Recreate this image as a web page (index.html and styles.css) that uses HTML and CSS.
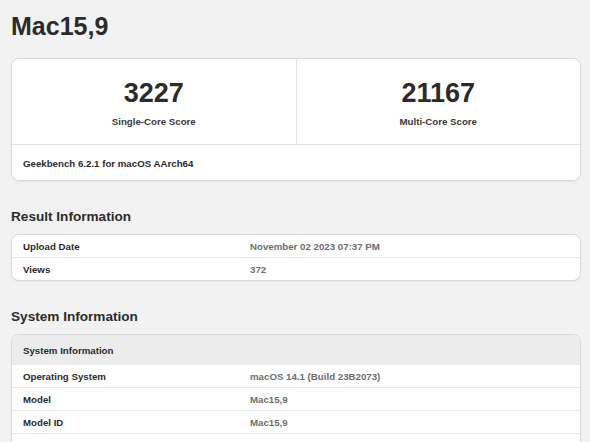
FILE: index.html
```html
<html lang="en">
  <head>
    <meta charset="UTF-8" />
    <meta name="viewport" content="width=device-width, initial-scale=1.0" />
    <title>Mac15,9 - Geekbench</title>
    <link rel="stylesheet" href="styles.css">
  </head>

  <body>
    <div class="page">
      <h1 class="device">Mac15,9</h1>

      <div class="card scores">
        <div class="score-row">
          <div class="score">
            <div class="value">3227</div>
            <div class="label">Single-Core Score</div>
          </div>
          <div class="score">
            <div class="value">21167</div>
            <div class="label">Multi-Core Score</div>
          </div>
        </div>
        <div class="score-footer">Geekbench 6.2.1 for macOS AArch64</div>
      </div>

      <h2 class="section">Result Information</h2>
      <table class="card info">
        <colgroup><col class="name-col" /><col /></colgroup>
        <tr><td class="name">Upload Date</td><td class="val">November 02 2023 07:37 PM</td></tr>
        <tr><td class="name">Views</td><td class="val">372</td></tr>
      </table>

      <h2 class="section">System Information</h2>
      <table class="card info">
        <colgroup><col class="name-col" /><col /></colgroup>
        <tr class="head"><th colspan="2">System Information</th></tr>
        <tr><td class="name">Operating System</td><td class="val">macOS 14.1 (Build 23B2073)</td></tr>
        <tr><td class="name">Model</td><td class="val">Mac15,9</td></tr>
        <tr><td class="name">Model ID</td><td class="val">Mac15,9</td></tr>
        <tr><td class="name">Motherboard</td><td class="val">Mac15,9</td></tr>
      </table>
    </div>
  </body>
</html>
```

FILE: styles.css
```css
body {
  margin: 0;
  background-color: #f2f2f2;
  color: #2b2b2b;
  font-family: "Liberation Sans", Arial, sans-serif;
}

.page {
  padding: 11px 9px 0 11px;
}

.device {
  margin: 0 0 17px 0;
  font-size: 25px;
  line-height: 30px;
  font-weight: bold;
}

.card {
  background-color: #fff;
  border: 1px solid #dadada;
  border-radius: 8px;
  box-shadow: 0 1px 2px rgba(0, 0, 0, 0.05);
}

.score-row {
  display: flex;
  border-bottom: 1px solid #e3e3e3;
}

.score {
  flex: 1;
  text-align: center;
  padding: 18px 0 15px;
}

.score + .score {
  border-left: 1px solid #e3e3e3;
}

.score .value {
  font-size: 27px;
  line-height: 32px;
  font-weight: bold;
}

.score .label {
  margin-top: 6px;
  font-size: 9.7px;
  line-height: 14px;
  font-weight: bold;
  color: #3a3a3a;
}

.score-footer {
  padding: 12px 11px 9px;
  font-size: 9.7px;
  line-height: 14px;
  font-weight: bold;
}

.section {
  margin: 27px 0 8px 0;
  font-size: 13.6px;
  line-height: 18px;
  font-weight: bold;
}

table.info {
  width: 100%;
  table-layout: fixed;
  border-collapse: separate;
  border-spacing: 0;
  overflow: hidden;
}

.info col.name-col {
  width: 227px;
}

.info td,
.info th {
  padding: 5px 11px 3px;
  font-size: 9.7px;
  line-height: 14px;
  font-weight: bold;
  text-align: left;
  border-bottom: 1px solid #e8e8e8;
}

.info tr:last-child td {
  border-bottom: none;
}

.info td.val {
  color: #6e6e6e;
}

.info tr.head th {
  padding: 9px 11px 7px;
  background-color: #ececec;
  border-bottom: none;
  border-radius: 8px 8px 0 0;
}
```
